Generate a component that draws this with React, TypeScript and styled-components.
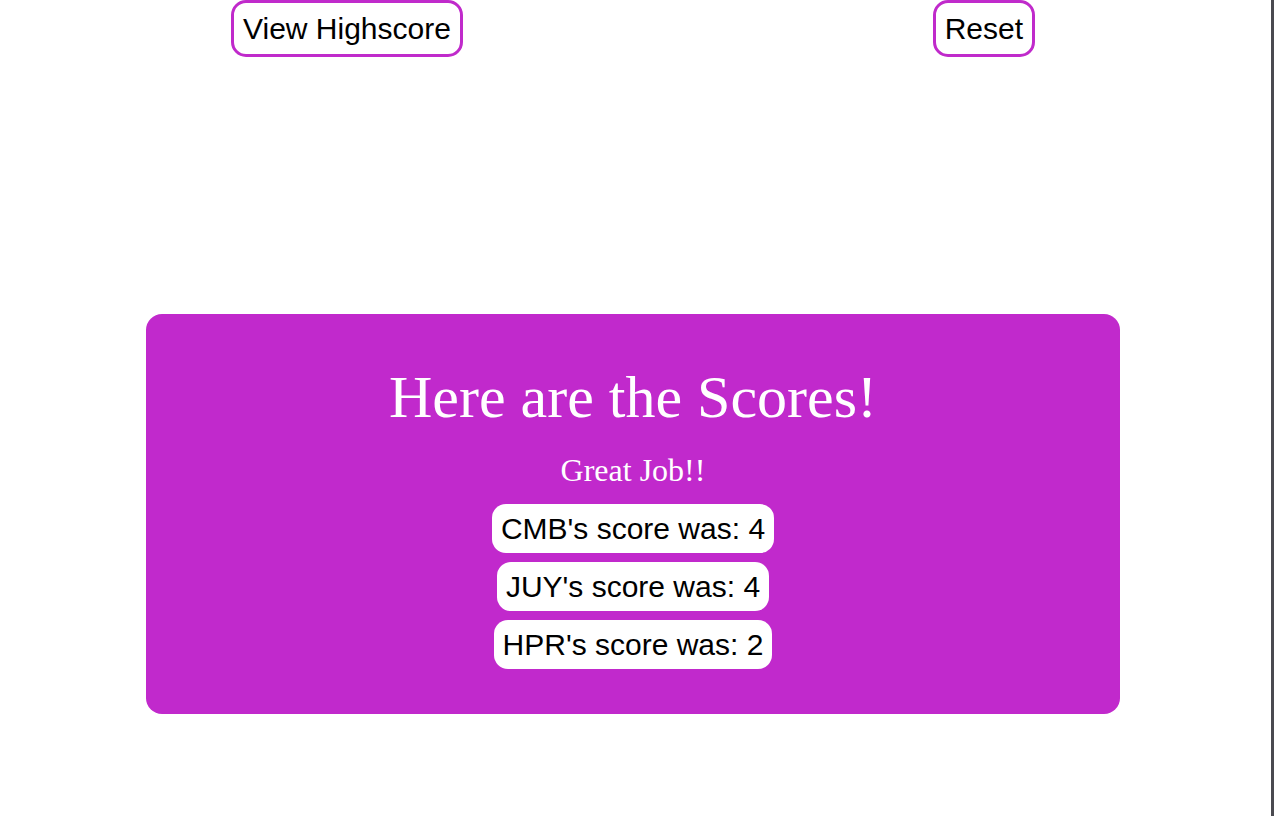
import React from "react";
import styled, { createGlobalStyle } from "styled-components";

const Global = createGlobalStyle`
  html, body { margin: 0; padding: 0; background: #ffffff; }
  body { font-family: "Liberation Serif", "Times New Roman", serif; }
`;

const Page = styled.div`
  min-height: 816px;
  box-sizing: border-box;
  border-right: 3px solid #4a4a50;
  display: flex;
  flex-direction: column;
`;

const Toolbar = styled.div`
  display: flex;
  justify-content: space-between;
  padding: 0 236px 0 231px;
`;

const TopButton = styled.button`
  font-family: "Liberation Sans", Arial, sans-serif;
  font-size: 30px;
  line-height: 35px;
  color: #000000;
  background: #ffffff;
  border: 3px solid #c02acb;
  border-radius: 15px;
  padding: 8px 9px;
  margin: 0;
  cursor: pointer;
`;

const Card = styled.section`
  margin: 257px 0 0 146px;
  width: 974px;
  box-sizing: border-box;
  background: #c129cc;
  border-radius: 16px;
  padding: 50px 0 45px;
  display: flex;
  flex-direction: column;
  align-items: center;
  color: #ffffff;
`;

const Title = styled.h1`
  margin: 0;
  font-family: "Liberation Serif", "Times New Roman", serif;
  font-weight: 400;
  font-size: 60px;
  line-height: 66px;
`;

const Subtitle = styled.p`
  margin: 22px 0 16px;
  font-family: "Liberation Serif", "Times New Roman", serif;
  font-size: 32px;
  line-height: 36px;
`;

const ScoreList = styled.div`
  display: flex;
  flex-direction: column;
  align-items: center;
  gap: 9px;
`;

const ScorePill = styled.div`
  background: #ffffff;
  color: #000000;
  font-family: "Liberation Sans", Arial, sans-serif;
  font-size: 30px;
  line-height: 35px;
  padding: 7px 9px;
  border-radius: 14px;
`;

const scores = [
  { name: "CMB", score: 4 },
  { name: "JUY", score: 4 },
  { name: "HPR", score: 2 },
];

export default function App() {
  return (
    <>
      <Global />
      <Page>
        <Toolbar>
          <TopButton>View Highscore</TopButton>
          <TopButton>Reset</TopButton>
        </Toolbar>
        <Card>
          <Title>Here are the Scores!</Title>
          <Subtitle>Great Job!!</Subtitle>
          <ScoreList>
            {scores.map((s) => (
              <ScorePill key={s.name}>
                {s.name}'s score was: {s.score}
              </ScorePill>
            ))}
          </ScoreList>
        </Card>
      </Page>
    </>
  );
}
